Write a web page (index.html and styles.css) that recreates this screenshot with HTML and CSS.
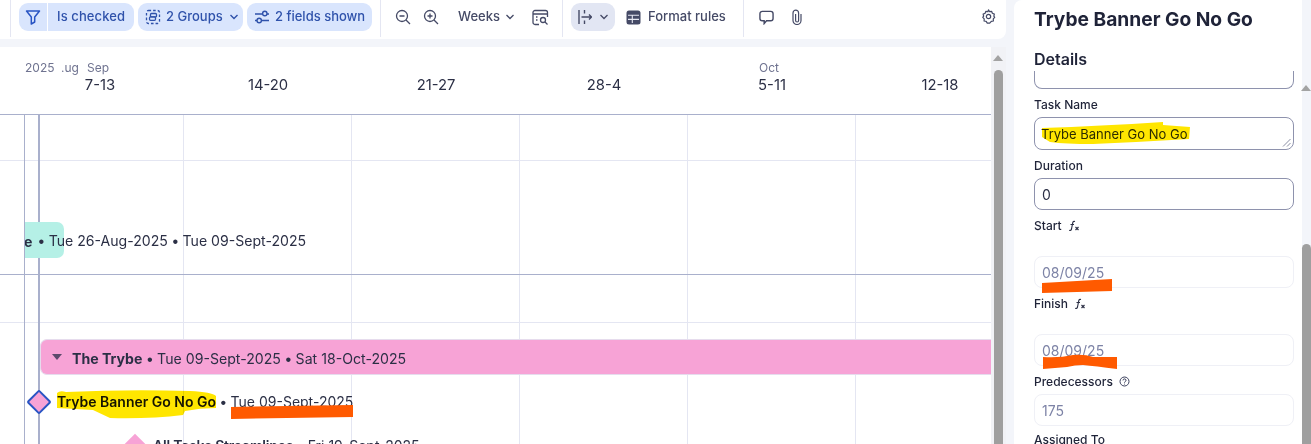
FILE: index.html
```html
<!DOCTYPE html>
<html lang="en">
<head>
<meta charset="utf-8">
<title>Gantt</title>
<link rel="stylesheet" href="styles.css">
</head>
<body>
<div class="app">
  <main class="main">
    <div class="toolbar">
      <div class="tgroup first">
        <div class="pill filter">
          <span class="filter-ic"><svg width="18" height="18" viewBox="0 0 18 18" fill="none" stroke="#2a55c4" stroke-width="1.500" stroke-linejoin="round"><path d="M2.500 3h13L10.700 9v5l-3.400 2V9z"/></svg></span>
          <span class="filter-tx lift">Is checked</span>
        </div>
        <div class="pill groups">
          <svg width="16" height="16" viewBox="0 0 16 16" fill="none" stroke="currentColor" stroke-width="1.300"><path stroke-dasharray="2.600 2" d="M3.500 1.500h9a2 2 0 0 1 2 2v9a2 2 0 0 1-2 2h-9a2 2 0 0 1-2-2v-9a2 2 0 0 1 2-2z"/><rect x="5.500" y="4.500" width="6" height="3.400" rx="1"/><rect x="4.500" y="7.900" width="6" height="3.400" rx="1"/></svg>
          <span class="lift">2 Groups</span>
          <svg class="chev" width="10" height="6" viewBox="0 0 10 6" fill="none" stroke="currentColor" stroke-width="1.400"><path d="M1.500 1l3.500 3.500L8.500 1"/></svg>
        </div>
        <div class="pill fields">
          <svg width="16" height="16" viewBox="0 0 16 16" fill="none" stroke="currentColor" stroke-width="1.400"><path d="M1 5h7.500M13 5h2M1 11.500h2M7.500 11.500H15"/><circle cx="10.800" cy="4.500" r="2.200"/><circle cx="5.200" cy="11.500" r="2.200"/></svg>
          <span class="lift">2 fields shown</span>
        </div>
      </div>
      <div class="tgroup zoomers">
        <svg width="18" height="18" viewBox="0 0 18 18" fill="none" stroke="currentColor" stroke-width="1.300"><circle cx="8" cy="8" r="5.500"/><path d="M12 12l4 4M5.500 8h5"/></svg>
        <svg class="zin" width="18" height="18" viewBox="0 0 18 18" fill="none" stroke="currentColor" stroke-width="1.300"><circle cx="8" cy="8" r="5.500"/><path d="M12 12l4 4M5.500 8h5M8 5.500v5"/></svg>
        <span class="weeks lift">Weeks</span>
        <svg class="chev2" width="10" height="6" viewBox="0 0 10 6" fill="none" stroke="currentColor" stroke-width="1.300"><path d="M1.500 1l3.500 3.500L8.500 1"/></svg>
        <svg class="cal" width="17" height="17" viewBox="0 0 17 17" fill="none" stroke="currentColor" stroke-width="1.300"><path d="M7 15.500H3a2 2 0 0 1-2-2v-10a2 2 0 0 1 2-2h10.500a2 2 0 0 1 2 2V8M1 5h14.500"/><path d="M4 8h1.500M4 11h1.500"/><circle cx="11" cy="11" r="2.500"/><path d="M13 13l2.500 2.500"/></svg>
      </div>
      <div class="tgroup rules">
        <div class="pill dep">
          <svg width="14" height="16" viewBox="0 0 14 16" fill="none" stroke="currentColor" stroke-width="1.400"><path d="M1 1v14M6.500 1v3.500M6.500 11.500V15M3.500 8H13.500M11 5.500L13.500 8 11 10.500"/></svg>
          <svg width="10" height="6" viewBox="0 0 10 6" fill="none" stroke="currentColor" stroke-width="1.300"><path d="M1.500 1l3.500 3.500L8.500 1"/></svg>
        </div>
        <div class="format">
          <svg width="15" height="15" viewBox="0 0 15 15"><rect x="0.500" y="0.500" width="14" height="14" rx="2.500" fill="#454a66"/><path d="M2 5.200h11M2 9.400h11M6.300 5.200V13" stroke="#e6e8f2" stroke-width="1.100"/></svg>
          <span class="lift">Format rules</span>
        </div>
      </div>
      <div class="tgroup extras">
        <svg width="15" height="15" viewBox="0 0 16 16" fill="none" stroke="currentColor" stroke-width="1.500"><path d="M3.500 1.500h9a2.500 2.500 0 0 1 2.500 2.500v5a2.500 2.500 0 0 1-2.500 2.500H8l-2.500 3v-3h-2A2.500 2.500 0 0 1 1 9V4a2.500 2.500 0 0 1 2.500-2.500z"/></svg>
        <svg width="12" height="16" viewBox="0 0 12 16" fill="none" stroke="currentColor" stroke-width="1.200"><path d="M10 5v6.500a4 4 0 0 1-8 0V4a2.800 2.800 0 0 1 5.600 0v7.500a1.500 1.500 0 0 1-3 0V5"/></svg>
      </div>
      <svg class="gear" width="15" height="15" viewBox="0 0 16 16" fill="none" stroke="currentColor" stroke-width="1.300"><path d="M8 1l1.200 1.900 2.200-.4.700 2.100 2.100.9-.5 2.200.9 1.300-1.500 1.600.1 2.200-2.200.4L9.300 15H6.700l-1.200-1.800-2.200-.4.100-2.200L1.900 9l.9-1.300-.5-2.200 2.100-.9.700-2.100 2.200.4z" stroke-linejoin="round"/><circle cx="8" cy="8" r="2.300"/></svg>
    </div>

    <div class="gantt">
      <div class="chart">
        <div class="head">
          <span class="month m-year">2025</span>
          <span class="month m-aug">.ug</span>
          <span class="month m-sep">Sep</span>
          <span class="month m-oct">Oct</span>
          <div class="weeks-row">
            <span>7-13</span><span>14-20</span><span>21-27</span><span>28-4</span><span>5-11</span><span>12-18</span>
          </div>
        </div>
        <div class="rows">
          <div class="row r1"></div>
          <div class="row r2">
            <div class="bar teal"><span class="bold clip-e">e</span></div>
            <div class="bar-text t-teal"><span class="dot">•</span> Tue 26-Aug-2025 <span class="dot">•</span> Tue 09-Sept-2025</div>
          </div>
          <div class="row r3"></div>
          <div class="row r4">
            <div class="bar pink">
              <span class="caret"></span>
              <span class="bold">The Trybe</span>&nbsp;<span class="dot">•</span>&nbsp;Tue 09-Sept-2025&nbsp;<span class="dot">•</span>&nbsp;Sat 18-Oct-2025
            </div>
            <span class="diamond d-main"></span>
            <div class="bar-text t-main"><span class="name">Trybe Banner Go No Go</span> <span class="dot">•</span> Tue 09-Sept-2025</div>
            <span class="diamond d-sub"></span>
            <div class="bar-text t-sub"><span class="sub-name">All Tasks Streamlines</span> <span class="dot">•</span> Fri 19-Sept-2025</div>
          </div>
          <span class="vline v1"></span>
          <span class="vline v2"></span>
        </div>
      </div>
      <div class="vscroll">
        <span class="arrow"></span>
        <span class="thumb"></span>
      </div>
    </div>
  </main>

  <aside class="panel">
    <div class="panel-body">
      <h1>Trybe Banner Go No Go</h1>
      <h2>Details</h2>
      <div class="stub"></div>
      <label class="lab">Task Name</label>
      <div class="box area">Trybe Banner Go No Go
        <svg class="grip" width="9" height="9" viewBox="0 0 9 9" stroke="#8a8ea3" fill="none"><path d="M1 8.500L8.500 1M5 8.500L8.500 5"/></svg>
      </div>
      <label class="lab">Duration</label>
      <div class="box dur">0</div>
      <label class="lab tall">Start
        <svg class="fx" width="12" height="12" viewBox="0 0 12 12" fill="none" stroke="#2b2f45" stroke-width="1.150"><path d="M7 1.500c-1.500-.5-2 .2-2.300 1.500l-1.200 6c-.3 1.300-1 1.800-2.300 1.300M2.500 4.500h3.500M7.500 7l3 3M10.500 7l-3 3"/></svg>
      </label>
      <div class="box off">08/09/25</div>
      <label class="lab tall">Finish
        <svg class="fx" width="12" height="12" viewBox="0 0 12 12" fill="none" stroke="#2b2f45" stroke-width="1.150"><path d="M7 1.500c-1.500-.5-2 .2-2.300 1.500l-1.200 6c-.3 1.300-1 1.800-2.300 1.300M2.500 4.500h3.500M7.500 7l3 3M10.500 7l-3 3"/></svg>
      </label>
      <div class="box off">08/09/25</div>
      <label class="lab">Predecessors
        <svg class="help" width="11" height="11" viewBox="0 0 11 11" fill="none" stroke="#3a3f5c"><circle cx="5.500" cy="5.500" r="4.500"/><path d="M4 4.400a1.500 1.500 0 1 1 2.200 1.300c-.5.300-.7.500-.7 1"/><path d="M5.500 7.700v.8"/></svg>
      </label>
      <div class="box off">175</div>
      <label class="lab last">Assigned To</label>
    </div>
    <div class="pscroll">
      <span class="arrow"></span>
      <span class="thumb"></span>
    </div>
  </aside>
</div>

<svg class="marks multiply" width="1311" height="444" viewBox="0 0 1311 444">
  <path class="yellow" d="M57 393Q60 390 66 392Q130 389 190 391Q212 392 216 396L216 408Q200 408 185 411L183 415Q150 419 110 418L93 410Q75 409 57 408z"/>
  <path class="yellow" d="M1042 128Q1100 126 1163 122L1163 125L1190 127L1189 139Q1140 142 1093 144Q1065 144 1050 142L1042 137z"/>
</svg>
<svg class="marks" width="1311" height="444" viewBox="0 0 1311 444">
  <path class="orange" d="M231 407L353 405L353 417L231 419z"/>
  <path class="orange" d="M1042 283L1112 279L1112 291L1042 293z"/>
  <path class="orange" d="M1043 357Q1060 358 1073 355Q1085 354 1093 357L1117 357L1117 369Q1095 366 1083 365Q1075 365 1067 367L1043 369z"/>
</svg>
</body>
</html>
```
FILE: styles.css
```css
* { box-sizing: border-box; }
html, body { margin: 0; height: 444px; overflow: hidden; }
body {
  background: #f3f5fa;
  font-family: Inter, "Liberation Sans", sans-serif;
  color: #2b2f45;
  position: relative;
}
.app { display: flex; height: 444px; }
.main { width: 1006px; display: flex; flex-direction: column; gap: 8px; flex: none; }

/* toolbar */
.toolbar {
  height: 39px;
  background: #fff;
  border-radius: 0 0 8px 0;
  display: flex;
  align-items: flex-start;
  padding-left: 10px;
  flex: none;
  color: #454a66;
  font-size: 13px;
  font-weight: 500;
}
.lift { padding-bottom: 2px; }
.tgroup { display: flex; align-items: center; height: 37px; }
.tgroup.first { border-left: 1px solid #e4e6f2; border-right: 1px solid #e4e6f2; padding: 0 8px 3px 8px; gap: 4px; width: 371px; height: 37px; }
.pill { display: flex; align-items: center; height: 28px; border-radius: 9px; background: #d9e5fd; color: #2f52ab; }
.filter { width: 115px; overflow: hidden; }
.filter-ic { width: 29px; height: 28px; display: flex; align-items: center; justify-content: center; border-right: 1px solid #fff; }
.filter-tx { padding-left: 9px; letter-spacing: 0.1px; }
.groups { width: 105px; padding-left: 7px; gap: 5px; }
.chev { margin-left: 1px; }
.fields { width: 125px; padding-left: 7px; gap: 5px; }

.zoomers { width: 182px; padding: 0 0 3px 13px; border-right: 1px solid #e4e6f2; }
.zin { margin-left: 10px; }
.weeks { margin-left: 18px; }
.chev2 { margin-left: 5px; }
.cal { margin-left: 17px; }

.rules { width: 181px; padding: 0 0 3px 8px; border-right: 1px solid #e4e6f2; }
.dep { background: #e2e6f3; color: #454a66; width: 44px; padding-left: 7px; gap: 7px; }
.format { display: flex; align-items: center; gap: 7px; margin-left: 11px; }

.extras { padding: 0 0 3px 15px; gap: 17px; }
.gear { margin: 9px 0 0 178px; }

/* gantt */
.gantt { flex: 1; display: flex; background: #fff; min-height: 0; }
.chart { width: 991px; flex: none; display: flex; flex-direction: column; overflow: hidden; }
.head { height: 68px; flex: none; border-bottom: 1px solid #a9b0cc; position: relative; }
.month { position: absolute; top: 13px; font-size: 12px; color: #6f7390; }
.m-year { left: 25px; }
.m-aug { left: 61px; }
.m-sep { left: 87px; }
.m-oct { left: 759px; }
.weeks-row { display: grid; grid-template-columns: repeat(6, 168px); padding: 29px 0 0 16px; font-size: 14.800px; line-height: 18px; color: #2b2f45; text-align: center; }

.rows { position: relative; flex: 1; }
.rows::before {
  content: "";
  position: absolute;
  top: 0; bottom: 0; left: 24px; right: 0;
  background: repeating-linear-gradient(90deg, transparent 0 159px, #e4e6f2 159px 160px, transparent 160px 168px);
  background-size: 168px 100%;
}
.row { position: relative; border-bottom: 1px solid #e4e6f2; }
.r1 { height: 46px; }
.r2 { height: 114px; border-bottom-color: #a9b0cc; }
.r3 { height: 48px; }
.r4 { height: 121px; border-bottom: 0; }

.vline { position: absolute; top: 0; bottom: 0; background: #a9b0cc; }
.v1 { left: 24px; width: 1px; }
.v2 { left: 38px; width: 2px; }

.bar { position: absolute; display: flex; align-items: center; font-size: 14.130px; z-index: 2; white-space: nowrap; }
.bold { font-weight: 700; }
.dot { font-weight: 700; }
.teal { left: 25px; top: 61px; width: 39px; height: 36px; background: #b5f0e6; border-radius: 0 7px 7px 0; overflow: hidden; padding-top: 2px; }
.clip-e { margin-left: -1px; }
.bar-text { position: absolute; font-size: 14px; line-height: 18px; white-space: nowrap; z-index: 2; }
.t-teal { left: 38px; top: 71px; font-size: 14.100px; }
.pink { left: 40px; top: 16px; width: 951px; height: 36px; background: #f7a3d6; border: 1px solid #e6dced; border-right: 0; border-radius: 7px 0 0 7px; padding: 2px 0 0 31px; }
.caret { position: absolute; left: 11px; top: 14px; border: 5px solid transparent; border-top: 6px solid #5c4a6c; border-bottom: 0; }
.diamond { position: absolute; transform: rotate(45deg); background: #f7a3d6; z-index: 2; }
.d-main { left: 30px; top: 70px; width: 18px; height: 18px; border: 2px solid #2a55c4; border-radius: 2px; }
.d-sub { left: 127px; top: 114px; width: 16px; height: 16px; }
.t-main { left: 57px; top: 70px; color: #2b2f45; }
.name { font-weight: 600; color: #15151f; }
.t-sub { left: 153px; top: 114px; }
.sub-name { font-weight: 600; letter-spacing: -0.200px; }

.vscroll { width: 15px; flex: none; position: relative; background: #f1f2f6; }
.arrow { position: absolute; width: 0; height: 0; border: 5px solid transparent; border-bottom: 6px solid #a3a3a3; border-top: 0; }
.thumb { position: absolute; background: #9f9f9f; border-radius: 5px 5px 0 0; }
.vscroll .arrow { left: 2px; top: 8px; }
.vscroll .thumb { left: 3px; top: 23px; width: 9px; bottom: 0; }

/* panel */
.panel { margin-left: 8px; width: 297px; flex: none; background: #fff; border-radius: 8px 0 0 0; display: flex; }
.panel-body { width: 288px; flex: none; padding: 0 8px 0 20px; }
.panel h1 { margin: 7px 0 0; font-size: 19.200px; line-height: 24px; font-weight: 700; color: #1f2338; white-space: nowrap; }
.panel h2 { margin: 16px 0 0; font-size: 16px; line-height: 24px; font-weight: 600; color: #1f2338; }
.stub { height: 18px; border: 1px solid #8e92ad; border-top: 0; border-radius: 0 0 8px 8px; width: 260px; }
.lab { display: block; font-size: 12px; line-height: 15px; font-weight: 500; color: #1f2338; margin-top: 8px; height: 20px; }
.lab.tall { height: 38px; }
.lab.last { margin-top: 6px; }
.fx { margin-left: 3px; vertical-align: -2px; }
.help { margin-left: 3px; vertical-align: -1px; }
.box { width: 260px; border-radius: 8px; font-size: 14px; padding-left: 7px; display: flex; align-items: center; position: relative; }
.area { height: 33px; border: 1px solid #8e92ad; color: #2b2f45; font-size: 13px; padding-left: 6px; }
.dur { height: 32px; border: 1px solid #8e92ad; color: #2b2f45; }
.off { height: 32px; border: 1px solid #eff0f6; color: #7d83a6; font-size: 14px; }
.grip { position: absolute; right: 2px; bottom: 2px; }

.pscroll { width: 9px; position: relative; flex: none; background: #f3f5fa; margin-left: 0; }
.pscroll .arrow { left: -1px; top: 85px; }
.pscroll .thumb { left: 0; top: 244px; width: 9px; bottom: 0; }

/* markers */
.marks { position: absolute; left: 0; top: 0; pointer-events: none; z-index: 5; }
.multiply { mix-blend-mode: multiply; }
.yellow { fill: #ffe600; }
.orange { fill: #ff5a00; }
```
